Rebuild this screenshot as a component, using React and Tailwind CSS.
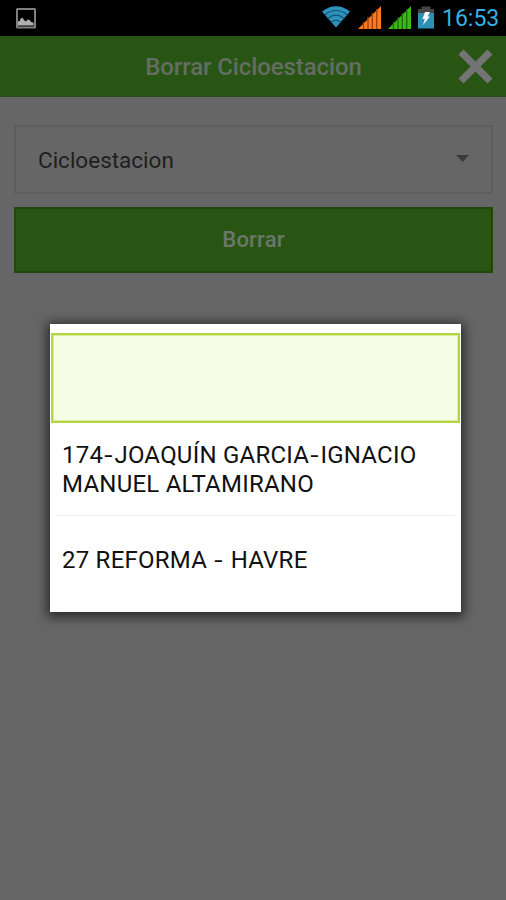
const stations = [
  { id: 174, lines: ['174-JOAQUÍN GARCIA-IGNACIO', 'MANUEL ALTAMIRANO'] },
  { id: 27, lines: ['27 REFORMA - HAVRE'] },
];

function PictureIcon() {
  return (
    <svg className="mt-[2px] h-[21px] w-5" viewBox="0 0 20 21" fill="none">
      <rect x="1" y="1" width="18" height="18.500" rx="0.500" stroke="#808080" strokeWidth="2" />
      <path d="M2 17.500v-4l1.700-.5 1-2.500 1.800-.7 1.700 2.400 1.600 1.200 2-1.800 1.800.3 1.600 2.100 2.400.8v2.700z" fill="#b0b0b0" />
    </svg>
  );
}

function WifiIcon() {
  return (
    <svg className="h-[23px] w-7" viewBox="0 0 28 23">
      <path d="M0 5.500Q14-5 28 5.500L14 21.500z" fill="#2d93bd" />
      <g fill="none" stroke="#14506e" strokeWidth="1.100">
        <path d="M2.500 9Q14 0 25.500 9" />
        <path d="M5.500 12.800Q14 5.500 22.500 12.800" />
        <path d="M9 16.500Q14 12 19 16.500" />
      </g>
    </svg>
  );
}

function SignalIcon({ color, stripe }) {
  return (
    <svg className="h-[23px] w-[23px]" viewBox="0 0 23 23">
      <path d="M0 23L23 0V23z" fill={color} />
      <path d="M5.500 16v7M10 11v12M14.300 7v16M18.700 3v20" stroke={stripe} strokeWidth="1.300" />
    </svg>
  );
}

function BatteryIcon() {
  return (
    <svg className="h-[23px] w-4" viewBox="0 0 16 23">
      <path d="M0 3h3.500V.500h9V3H16v5H0z" fill="#454545" />
      <path d="M0 7h16v15.500H0z" fill="#2e8fb4" />
      <path d="M7 6h5L9.500 10.500H12L5 19l1.800-6H4.500z" fill="#f4fbff" />
    </svg>
  );
}

function StatusBar() {
  return (
    <div className="flex h-9 items-start justify-between bg-black pt-[6px] pl-4">
      <PictureIcon />
      <div className="flex pr-2">
        <div className="mr-[8px]"><WifiIcon /></div>
        <div className="mr-[7px]"><SignalIcon color="#fc7a1e" stripe="#9c410a" /></div>
        <div className="mr-[7px]"><SignalIcon color="#3bb914" stripe="#1c6a08" /></div>
        <div className="mr-[8px]"><BatteryIcon /></div>
        <span className="w-14 text-[23px] leading-[26px] whitespace-nowrap text-[#36b0e2]">16:53</span>
      </div>
    </div>
  );
}

function Header() {
  return (
    <header className="flex h-[61px] items-center border-b border-[#2c4a1e] bg-[#295514] pr-[13px]">
      <h1 className="flex-1 pt-[2px] pl-[49px] text-center text-2xl font-medium tracking-[-0.1px] text-[#636d63]">Borrar Cicloestacion</h1>
      <svg className="h-[35px] w-[35px]" viewBox="0 0 35 35" stroke="#747474" strokeWidth="7">
        <path d="M3 3l29 29M32 3l-29 29" />
      </svg>
    </header>
  );
}

function StationLine({ text }) {
  return (
    <span className="whitespace-nowrap tracking-[0.23px]">
      {text.split(/(-)/).map((part, i) =>
        part === '-' ? (
          <span key={i} className="inline-block scale-x-125 px-[2.200px]">-</span>
        ) : (
          part
        )
      )}
    </span>
  );
}

// Station picker shown above the dimmed form
function StationDialog() {
  return (
    <div className="absolute top-[324px] left-[50px] h-[288px] w-[411px] bg-white pt-[9px] text-2xl leading-[29px] text-[#111] shadow-[0_2px_11px_3px_rgba(0,0,0,0.6)]">
      <div className="mx-[1px] h-[90px] border-2 border-[#b2d63f] bg-[#f6ffe6] outline-1 -outline-offset-3 outline-[#d9eda0]" />
      <ul className="mx-1.5">
        {stations.map((s) => (
          <li key={s.id} className="flex h-[93px] flex-col justify-center border-b border-[#f1f1f1] px-1.5 pt-[2px] last:h-[89px] last:border-0 last:pt-0">
            {s.lines.map((line) => (
              <StationLine key={line} text={line} />
            ))}
          </li>
        ))}
      </ul>
    </div>
  );
}

export default function App() {
  return (
    <div className="relative h-[900px] w-[506px] overflow-hidden bg-[#666] font-['Roboto',sans-serif]">
      <StatusBar />
      <Header />
      <main className="flex flex-col pt-7 pr-[13px] pl-[14px]">
        <button className="flex h-[69px] items-center justify-between rounded-xs border-2 border-[#5d5d5d] pr-[22px] pl-[22px] text-[22.500px] text-[#1f1f1f]">
          <span className="pt-[2px]">Cicloestacion</span>
          <svg className="mb-[3px] h-[7px] w-[13px]" viewBox="0 0 13 7">
            <path d="M0 0h13L6.500 7z" fill="#3a3a3a" />
          </svg>
        </button>
        <button className="mt-[13px] h-[66px] border-2 border-[#20470f] bg-[#295514] pb-[2px] text-[22px] font-medium tracking-[0.200px] text-[#6c776a]">
          Borrar
        </button>
      </main>
      <StationDialog />
    </div>
  );
}
